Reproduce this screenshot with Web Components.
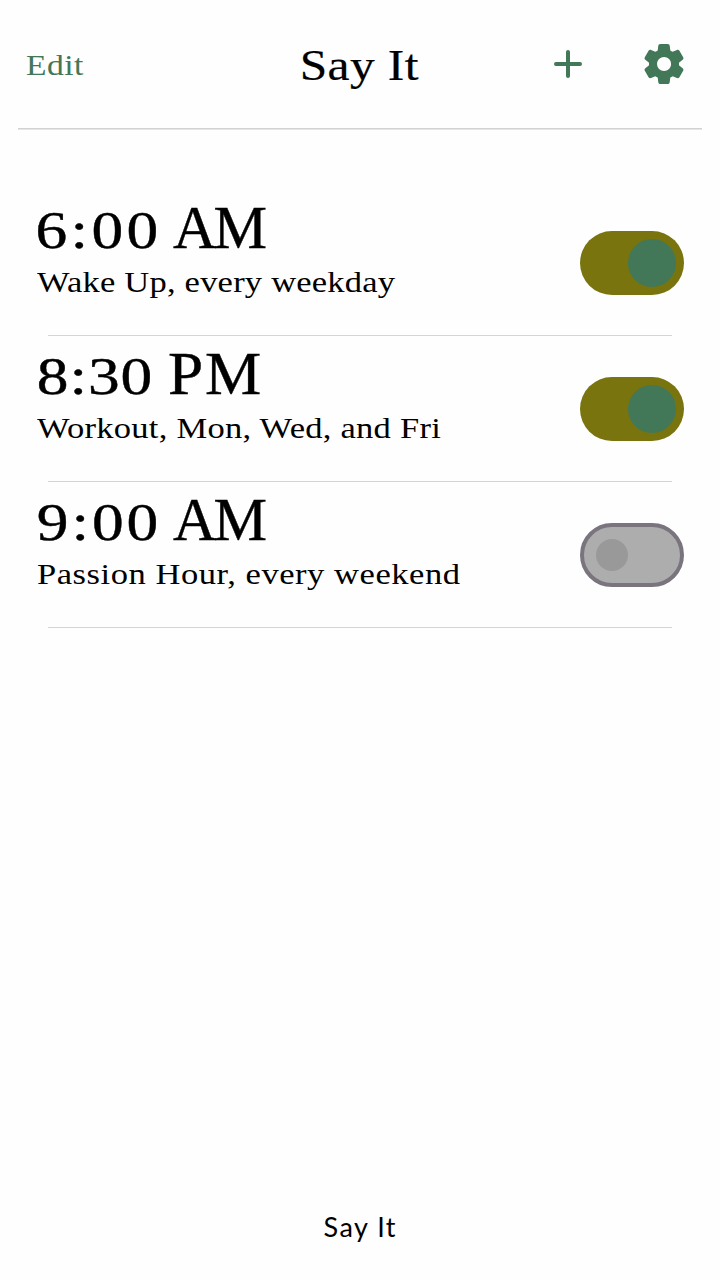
<!DOCTYPE html>
<html lang="en">
<head>
<meta charset="utf-8">
<title>Say It</title>
<style>
html,body{margin:0;background:#fefefe;color:#000}
body{font-family:"Liberation Serif",serif}
</style>
</head>
<body>
<alarm-app></alarm-app>
<script>
const define = (name, html, setup) => customElements.define(name, class extends HTMLElement {
  connectedCallback() {
    if (this.shadowRoot) return;
    const t = document.createElement('template');
    t.innerHTML = html;
    this.attachShadow({mode: 'open'}).append(t.content.cloneNode(true));
    if (setup) setup(this, this.shadowRoot);
  }
});

// Spreads one line of text over a given ink width, by glyph width and tracking together.
define('fit-text', `<style>
:host{display:inline-block;white-space:nowrap;line-height:inherit}
span{display:inline-block;transform-origin:0 50%;width:100%;text-align:left}
</style><span><slot></slot></span>`, (host, root) => {
  const span = root.querySelector('span'), cs = getComputedStyle(host);
  const ctx = document.createElement('canvas').getContext('2d');
  ctx.font = cs.fontSize + ' ' + cs.fontFamily;
  const text = host.textContent, m = ctx.measureText(text), target = +host.getAttribute('width');
  const left = m.actualBoundingBoxLeft, ink = m.actualBoundingBoxRight + left;
  const s = +(host.getAttribute('stretch') || Math.sqrt(target / ink));
  host.style.width = target + 'px';
  span.style.letterSpacing = (target / s - ink) / (text.length - 1) + 'px';
  span.style.transform = `translateX(${left * s}px) scaleX(${s})`;
});

define('app-icon', `<style>:host{display:block;width:48px;height:48px;color:#427858}svg{display:block}</style>
<svg width="48" height="48" viewBox="0 0 24 24" fill="currentColor"></svg>`, (host, root) => {
  root.querySelector('svg').innerHTML = host.getAttribute('name') === 'add'
    ? '<path d="M12 6v12M6 12h12" fill="none" stroke="currentColor" stroke-width="2" stroke-linecap="round"/>'
    : '<path d="M19.5 12c0-.23-.01-.45-.03-.68l1.86-1.41c.4-.3.51-.86.26-1.3l-1.87-3.23c-.25-.44-.79-.62-1.25-.42l-2.15.91c-.37-.26-.76-.49-1.17-.68l-.29-2.31C14.8 2.38 14.37 2 13.87 2h-3.73c-.51 0-.94.38-1 .88l-.29 2.31c-.41.19-.8.42-1.17.68l-2.15-.91c-.46-.2-1-.02-1.25.42L2.41 8.62c-.25.44-.14.99.26 1.3l1.86 1.41a7.3 7.3 0 0 0 0 1.35l-1.86 1.41c-.4.3-.51.86-.26 1.3l1.87 3.23c.25.44.79.62 1.25.42l2.15-.91c.37.26.76.49 1.17.68l.29 2.31c.06.5.49.88.99.88h3.73c.5 0 .93-.38.99-.88l.29-2.31c.41-.19.8-.42 1.17-.68l2.15.91c.46.2 1 .02 1.25-.42l1.87-3.23c.25-.44.14-.99-.26-1.3l-1.86-1.41c.03-.23.04-.45.04-.68zM12.04 15.5c-1.93 0-3.5-1.57-3.5-3.5s1.57-3.5 3.5-3.5 3.5 1.57 3.5 3.5-1.57 3.5-3.5 3.5z"/>';
});

define('app-header', `<style>
:host{display:grid;grid-template-columns:1fr auto 1fr;grid-template-rows:128px 2px;align-items:center;height:130px;padding:0 32px 0 26px}
.edit{font-size:30px;line-height:36px;padding-top:2px;color:#427858}
h1{margin:0 0 0 7px;padding-top:2px;font-size:45px;line-height:54px;font-weight:400;-webkit-text-stroke:.2px #000}
.actions{display:flex;justify-content:flex-end;gap:48px}
hr{grid-column:1/-1;margin:0 -14px 0 -8px;border:0;height:1px;background:#d2d2d2;border-bottom:1px solid #e6e6e6}
</style>
<div class="edit"><fit-text width="58" stretch="1.12">Edit</fit-text></div>
<h1><fit-text width="116" stretch="1.1">Say It</fit-text></h1>
<div class="actions"><app-icon name="add"></app-icon><app-icon name="settings"></app-icon></div><hr>`);

define('toggle-switch', `<style>
:host{box-sizing:border-box;display:flex;align-items:center;width:104px;height:64px;border-radius:32px;background:#79740e;justify-content:flex-end;padding:0 8px}
i{width:48px;height:48px;border-radius:50%;background:#427858}
:host([off]){justify-content:flex-start;background:#adadad;border:4px solid #79747e;padding:0 12px}
:host([off]) i{width:32px;height:32px;background:#999}
</style><i></i>`);

define('alarm-row', `<style>
:host{box-sizing:border-box;display:grid;grid-template-columns:1fr auto;grid-template-rows:145px 1px;padding:0 36px;height:146px}
.info{padding:6px 0 0 1px}
.time{height:62px;line-height:62px;font-size:62px;white-space:nowrap;margin-left:1px;-webkit-text-stroke:.4px #000}
.desc{margin-top:6px;font-size:30px;line-height:36px}
.switch{display:flex;align-items:center;padding-top:1px}
hr{grid-column:1/-1;margin:0 12px;border:0;height:1px;background:#d4d4d4}
</style>
<div class="info"><div class="time"><slot name="time"></slot></div><div class="desc"><slot></slot></div></div>
<div class="switch"><slot name="switch"></slot></div><hr>`);

define('clock-time', `<style>
:host{display:inline-flex;align-items:baseline;font-size:62px;line-height:62px}
.d{font-size:52px}
</style><fit-text class="d"></fit-text><fit-text class="m"></fit-text>`, (host, root) => {
  const [d, m] = host.getAttribute('value').split(' '), [dw, gap, mw] = host.getAttribute('spans').split(' ');
  for (const [sel, text, w] of [['.d', d, dw], ['.m', m, mw]]) {
    const old = root.querySelector(sel), el = document.createElement('fit-text');
    el.className = old.className; el.textContent = text; el.setAttribute('width', w);
    if (sel === '.m') el.style.marginLeft = gap + 'px';
    else el.setAttribute('stretch', '1.22');
    old.replaceWith(el);
  }
});

define('alarm-app', `<style>
:host{display:flex;flex-direction:column;height:1280px}
main{flex:1;padding-top:60px}
footer{height:73px;text-align:center;font:27px/40px "Lato",sans-serif}
</style>
<app-header></app-header>
<main>
<alarm-row><clock-time slot="time" value="6:00 AM" spans="119 16 93"></clock-time><fit-text width="358" stretch="1.15">Wake Up, every weekday</fit-text><toggle-switch slot="switch"></toggle-switch></alarm-row>
<alarm-row><clock-time slot="time" value="8:30 PM" spans="113 18 91"></clock-time><fit-text width="404" stretch="1.15">Workout, Mon, Wed, and Fri</fit-text><toggle-switch slot="switch"></toggle-switch></alarm-row>
<alarm-row><clock-time slot="time" value="9:00 AM" spans="119 16 93"></clock-time><fit-text width="423" stretch="1.15">Passion Hour, every weekend</fit-text><toggle-switch slot="switch" off></toggle-switch></alarm-row>
</main>
<footer><fit-text width="73" stretch="1">Say It</fit-text></footer>`);
</script>
</body>
</html>
